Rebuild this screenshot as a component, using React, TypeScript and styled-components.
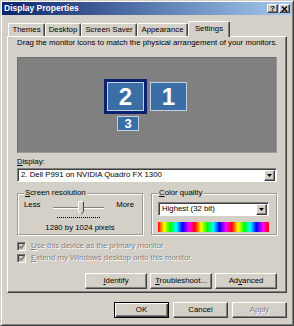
import styled, { createGlobalStyle, css } from "styled-components";

const GlobalStyle = createGlobalStyle`
  html, body {
    margin: 0;
    padding: 0;
    background: #d4d0c8;
  }
  body {
    font-family: "Liberation Sans", Arial, sans-serif;
    font-size: 7.8px;
    color: #000;
  }
  * {
    box-sizing: border-box;
  }
`;

const raised = css`
  border: 1px solid;
  border-color: #fff #404040 #404040 #fff;
  box-shadow: inset -1px -1px 0 #808080;
`;

const sunken = css`
  border: 1px solid;
  border-color: #808080 #fff #fff #808080;
  box-shadow: inset 1px 1px 0 #404040;
`;

const Window = styled.div`
  width: 294px;
  height: 326px;
  background: #d4d0c8;
  border: 1px solid;
  border-color: #d4d0c8 #404040 #404040 #d4d0c8;
  box-shadow: inset 1px 1px 0 #fff, inset -1px -1px 0 #808080;
  padding: 1px;
  display: flex;
  flex-direction: column;
`;

const TitleBar = styled.div`
  height: 13px;
  background: linear-gradient(to right, #0a246a, #a6caf0);
  display: flex;
  align-items: center;
  justify-content: space-between;
  padding: 0 2px 0 2px;
`;

const Title = styled.span`
  color: #fff;
  font-weight: bold;
  font-size: 8.5px;
  line-height: 13px;
`;

const TitleButtons = styled.div`
  display: flex;
  gap: 1px;
`;

const TitleButton = styled.div`
  ${raised};
  width: 11px;
  height: 9px;
  background: #d4d0c8;
  display: flex;
  align-items: center;
  justify-content: center;
  font-weight: bold;
  font-size: 8px;
  line-height: 7px;
  color: #000;
`;

const TabRow = styled.div`
  display: flex;
  align-items: flex-end;
  height: 15px;
  margin-top: 6px;
  padding-left: 6px;
  position: relative;
  z-index: 1;
`;

const Tab = styled.div<{ $w: number; $active?: boolean }>`
  width: ${({ $w }) => $w}px;
  height: ${({ $active }) => ($active ? 16 : 13)}px;
  margin-bottom: ${({ $active }) => ($active ? -1 : 0)}px;
  background: #d4d0c8;
  border-top: 1px solid #fff;
  border-left: 1px solid #fff;
  border-right: 1px solid #404040;
  box-shadow: inset -1px 0 0 #808080;
  border-radius: 2px 2px 0 0;
  display: flex;
  align-items: center;
  justify-content: center;
  padding-bottom: ${({ $active }) => ($active ? 2 : 0)}px;
  line-height: 10px;
`;

const Panel = styled.div`
  margin: 0 5px;
  height: 257px;
  ${raised};
  padding: 1px 9px 0 9px;
  display: flex;
  flex-direction: column;
`;

const Text = styled.div`
  line-height: 10px;
  white-space: nowrap;
`;

const Instruction = styled(Text)`
  margin-top: 0;
`;

const MonitorArea = styled.div`
  margin-top: 9px;
  height: 96px;
  background: #808080;
  border: 1px solid;
  border-color: #6e6e6e #9a9a9a #9a9a9a #6e6e6e;
  position: relative;
`;

const Monitor = styled.div<{ $x: number; $y: number; $w: number; $h: number; $selected?: boolean; $size: number }>`
  position: absolute;
  left: ${({ $x }) => $x}px;
  top: ${({ $y }) => $y}px;
  width: ${({ $w }) => $w}px;
  height: ${({ $h }) => $h}px;
  background: #3a6ea5;
  border: 1px solid #c4d2e8;
  outline: ${({ $selected }) => ($selected ? "3px solid #0b2270" : "none")};
  color: #fff;
  font-weight: bold;
  font-size: ${({ $size }) => $size}px;
  display: flex;
  align-items: center;
  justify-content: center;
  line-height: 1;
`;

const FieldLabel = styled(Text)`
  margin-top: 4px;
`;

const Combo = styled.div<{ $top: number }>`
  margin-top: ${({ $top }) => $top}px;
  height: 14px;
  ${sunken};
  background: #fff;
  display: flex;
  align-items: center;
  padding: 1px 1px 1px 3px;
`;

const ComboText = styled.span`
  flex: 1;
  line-height: 10px;
  white-space: nowrap;
`;

const ArrowButton = styled.div`
  ${raised};
  width: 11px;
  height: 11px;
  background: #d4d0c8;
  display: flex;
  align-items: center;
  justify-content: center;
`;

const Groups = styled.div`
  margin-top: 11px;
  display: flex;
  gap: 8px;
`;

const Group = styled.div`
  flex: 1;
  height: 42px;
  border: 1px solid #9c9990;
  box-shadow: 1px 1px 0 #fff, inset 1px 1px 0 #fff;
  position: relative;
  display: flex;
  flex-direction: column;
`;

const Legend = styled.span`
  position: absolute;
  top: -6px;
  left: 6px;
  padding: 0 1px;
  background: #d4d0c8;
  line-height: 10px;
  white-space: nowrap;
`;

const SliderRow = styled.div`
  margin-top: 6px;
  padding: 0 8px 0 6px;
  display: flex;
  justify-content: space-between;
  align-items: flex-start;
`;

const Slider = styled.div`
  width: 51px;
  height: 20px;
  position: relative;
`;

const Track = styled.div`
  position: absolute;
  left: 0;
  right: 0;
  top: 7px;
  height: 2px;
  border-top: 1px solid #808080;
  border-bottom: 1px solid #fff;
`;

const Ticks = styled.div`
  position: absolute;
  left: 4px;
  right: 4px;
  top: 17px;
  height: 2px;
  background-image: repeating-linear-gradient(to right, #000 0 1px, transparent 1px 2px);
  background-size: 100% 1px;
  background-repeat: no-repeat;
`;

const Thumb = styled.svg`
  position: absolute;
  left: 25px;
  top: 1px;
`;

const Pixels = styled(Text)`
  margin-top: 3px;
  text-align: center;
`;

const ColorCombo = styled(Combo)`
  margin-left: 6px;
  margin-right: 7px;
`;

const Rainbow = styled.div`
  margin: 6px 7px 0 6px;
  height: 10px;
  background: linear-gradient(
    to right,
    #ff0000 0%,
    #ffff00 5.5%,
    #00ff00 11%,
    #00ffff 16.5%,
    #0000ff 22%,
    #ff00ff 28%,
    #ff0000 33.3%,
    #ffff00 38.8%,
    #00ff00 44.3%,
    #00ffff 49.8%,
    #0000ff 55.3%,
    #ff00ff 61.3%,
    #ff0000 66.6%,
    #ffff00 72.1%,
    #00ff00 77.6%,
    #00ffff 83.1%,
    #0000ff 88.6%,
    #ff00ff 94.6%,
    #ff0000 100%
  );
`;

const CheckRow = styled.div<{ $top: number }>`
  margin-top: ${({ $top }) => $top}px;
  display: flex;
  align-items: center;
  gap: 5px;
  height: 10px;
`;

const CheckBox = styled.div`
  width: 9px;
  height: 9px;
  ${sunken};
  background: #d4d0c8;
  display: flex;
  align-items: center;
  justify-content: center;
`;

const DisabledText = styled.span`
  color: #808080;
  text-shadow: 1px 1px 0 #fff;
  line-height: 10px;
  white-space: nowrap;
`;

const ButtonRow = styled.div<{ $top: number; $gap: number }>`
  margin-top: ${({ $top }) => $top}px;
  display: flex;
  justify-content: flex-end;
  gap: ${({ $gap }) => $gap}px;
`;

const Button = styled.div<{ $w: number; $default?: boolean; $disabled?: boolean }>`
  width: ${({ $w }) => $w}px;
  height: 16px;
  background: #d4d0c8;
  display: flex;
  align-items: center;
  justify-content: center;
  line-height: 10px;
  white-space: nowrap;
  ${({ $default }) =>
    $default
      ? css`
          border: 1px solid #000;
          box-shadow: inset 1px 1px 0 #fff, inset -1px -1px 0 #404040, inset -2px -2px 0 #808080;
        `
      : raised};
  ${({ $disabled }) =>
    $disabled &&
    css`
      color: #808080;
      text-shadow: 1px 1px 0 #fff;
    `};
`;

const BottomRow = styled(ButtonRow)`
  padding-right: 5px;
`;

const DownArrow = () => (
  <svg width="5" height="3" viewBox="0 0 5 3">
    <path d="M0 0h5L2.5 3z" fill="#000" />
  </svg>
);

const Check = () => (
  <svg width="7" height="7" viewBox="0 0 7 7">
    <path d="M1 3l2 2 3.5-4" fill="none" stroke="#808080" strokeWidth="1.6" />
  </svg>
);

export default function App() {
  return (
    <>
      <GlobalStyle />
      <Window>
        <TitleBar>
          <Title>Display Properties</Title>
          <TitleButtons>
            <TitleButton>?</TitleButton>
            <TitleButton>
              <svg width="7" height="6" viewBox="0 0 7 6">
                <path d="M1 0.5l5 5M6 0.5l-5 5" stroke="#000" strokeWidth="1.4" />
              </svg>
            </TitleButton>
          </TitleButtons>
        </TitleBar>

        <TabRow>
          <Tab $w={37}>Themes</Tab>
          <Tab $w={36}>Desktop</Tab>
          <Tab $w={56}>Screen Saver</Tab>
          <Tab $w={51}>Appearance</Tab>
          <Tab $w={42} $active>
            Settings
          </Tab>
        </TabRow>

        <Panel>
          <Instruction>Drag the monitor icons to match the physical arrangement of your monitors.</Instruction>
          <MonitorArea>
            <Monitor $x={89} $y={24} $w={37} $h={29} $size={24} $selected>
              2
            </Monitor>
            <Monitor $x={132} $y={24} $w={37} $h={29} $size={24}>
              1
            </Monitor>
            <Monitor $x={99} $y={58} $w={22} $h={15} $size={13}>
              3
            </Monitor>
          </MonitorArea>

          <FieldLabel>
            <u>D</u>isplay:
          </FieldLabel>
          <Combo $top={1}>
            <ComboText>2. Dell P991 on NVIDIA Quadro FX 1300</ComboText>
            <ArrowButton>
              <DownArrow />
            </ArrowButton>
          </Combo>

          <Groups>
            <Group>
              <Legend>
                <u>S</u>creen resolution
              </Legend>
              <SliderRow>
                <Text>Less</Text>
                <Slider>
                  <Track />
                  <Ticks />
                  <Thumb width="6" height="14" viewBox="0 0 6 14">
                    <path d="M0.5 0.5h5v10l-2.5 3l-2.5-3z" fill="#d4d0c8" />
                    <path d="M0.5 10.5v-10h5" fill="none" stroke="#fff" />
                    <path d="M5.5 0.5v10l-2.5 3" fill="none" stroke="#404040" />
                    <path d="M0.5 10.5l2.5 3" fill="none" stroke="#fff" />
                  </Thumb>
                </Slider>
                <Text>More</Text>
              </SliderRow>
              <Pixels>1280 by 1024 pixels</Pixels>
            </Group>
            <Group>
              <Legend>
                <u>C</u>olor quality
              </Legend>
              <ColorCombo $top={8}>
                <ComboText>Highest (32 bit)</ComboText>
                <ArrowButton>
                  <DownArrow />
                </ArrowButton>
              </ColorCombo>
              <Rainbow />
            </Group>
          </Groups>

          <CheckRow $top={6}>
            <CheckBox>
              <Check />
            </CheckBox>
            <DisabledText>
              <u>U</u>se this device as the primary monitor
            </DisabledText>
          </CheckRow>
          <CheckRow $top={2}>
            <CheckBox>
              <Check />
            </CheckBox>
            <DisabledText>
              <u>E</u>xtend my Windows desktop onto this monitor.
            </DisabledText>
          </CheckRow>

          <ButtonRow $top={10} $gap={3}>
            <Button $w={62}>
              <span>
                <u>I</u>dentify
              </span>
            </Button>
            <Button $w={62}>
              <span>
                <u>T</u>roubleshoot...
              </span>
            </Button>
            <Button $w={62}>
              <span>
                Ad<u>v</u>anced
              </span>
            </Button>
          </ButtonRow>
        </Panel>

        <BottomRow $top={9} $gap={4}>
          <Button $w={55} $default>
            OK
          </Button>
          <Button $w={55}>Cancel</Button>
          <Button $w={55} $disabled>
            Apply
          </Button>
        </BottomRow>
      </Window>
    </>
  );
}
